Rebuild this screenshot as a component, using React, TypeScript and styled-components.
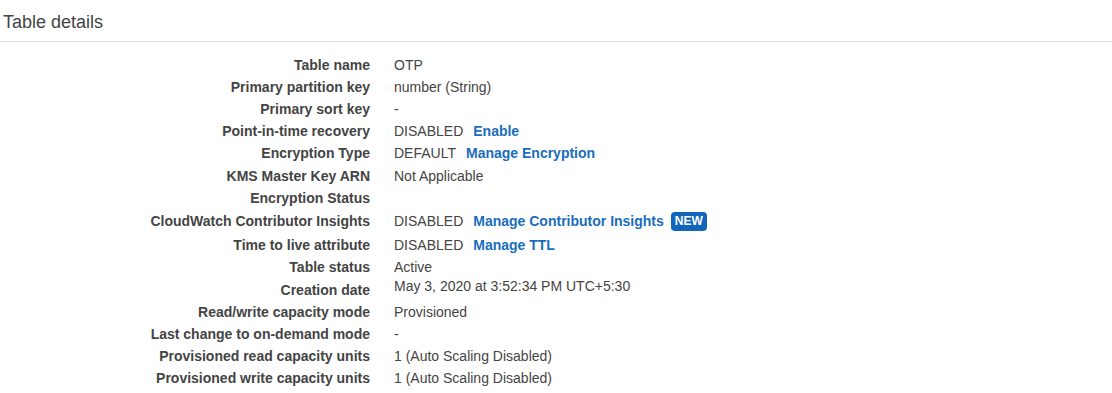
import styled, { createGlobalStyle } from "styled-components";

const GlobalStyle = createGlobalStyle`
  body {
    margin: 0;
    background: #fff;
    font-family: "Liberation Sans", Arial, sans-serif;
    color: #444;
  }
`;

const Panel = styled.div`
  width: 1112px;
`;

const Header = styled.div`
  height: 42px;
  border-bottom: 1px solid #dddddd;
  display: flex;
  align-items: center;
  padding-left: 3px;
  padding-top: 2px;
  box-sizing: border-box;
`;

const Title = styled.h2`
  margin: 0;
  font-size: 18px;
  font-weight: normal;
  color: #444;
  line-height: 22px;
`;

const Details = styled.div`
  padding-top: 12px;
  display: flex;
  flex-direction: column;
`;

const Row = styled.div<{ $h: number }>`
  display: flex;
  align-items: center;
  height: ${(p) => p.$h}px;
  font-size: 14px;
`;

const Label = styled.div`
  width: 370px;
  text-align: right;
  font-weight: bold;
  color: #444;
  flex-shrink: 0;
`;

const Value = styled.div<{ $top?: boolean }>`
  margin-left: 24px;
  display: flex;
  align-items: center;
  gap: 10px;
  color: #444;
  ${(p) => (p.$top ? "align-self: flex-start; line-height: 17px;" : "")}
`;

const Link = styled.a`
  color: #1a6dbd;
  font-weight: bold;
  text-decoration: none;
  cursor: pointer;
`;

const Badge = styled.span`
  display: inline-block;
  margin-left: -3px;
  padding: 0 4px;
  height: 19px;
  line-height: 19px;
  border-radius: 4px;
  background: #1166bb;
  color: #fff;
  font-size: 12px;
  font-weight: bold;
`;

type Item = {
  label: string;
  value: string;
  link?: string;
  badge?: string;
  h: number;
  top?: boolean;
};

const items: Item[] = [
  { label: "Table name", value: "OTP", h: 22 },
  { label: "Primary partition key", value: "number (String)", h: 22 },
  { label: "Primary sort key", value: "-", h: 22 },
  { label: "Point-in-time recovery", value: "DISABLED", link: "Enable", h: 22 },
  { label: "Encryption Type", value: "DEFAULT", link: "Manage Encryption", h: 22 },
  { label: "KMS Master Key ARN", value: "Not Applicable", h: 23 },
  { label: "Encryption Status", value: "", h: 22 },
  {
    label: "CloudWatch Contributor Insights",
    value: "DISABLED",
    link: "Manage Contributor Insights",
    badge: "NEW",
    h: 24,
  },
  { label: "Time to live attribute", value: "DISABLED", link: "Manage TTL", h: 23 },
  { label: "Table status", value: "Active", h: 22 },
  { label: "Creation date", value: "May 3, 2020 at 3:52:34 PM UTC+5:30", h: 23, top: true },
  { label: "Read/write capacity mode", value: "Provisioned", h: 22 },
  { label: "Last change to on-demand mode", value: "-", h: 22 },
  { label: "Provisioned read capacity units", value: "1 (Auto Scaling Disabled)", h: 22 },
  { label: "Provisioned write capacity units", value: "1 (Auto Scaling Disabled)", h: 22 },
];

export default function App() {
  return (
    <>
      <GlobalStyle />
      <Panel>
        <Header>
          <Title>Table details</Title>
        </Header>
        <Details>
          {items.map((it) => (
            <Row key={it.label} $h={it.h}>
              <Label>{it.label}</Label>
              <Value $top={it.top}>
                {it.value && <span>{it.value}</span>}
                {it.link && <Link>{it.link}</Link>}
                {it.badge && <Badge>{it.badge}</Badge>}
              </Value>
            </Row>
          ))}
        </Details>
      </Panel>
    </>
  );
}
